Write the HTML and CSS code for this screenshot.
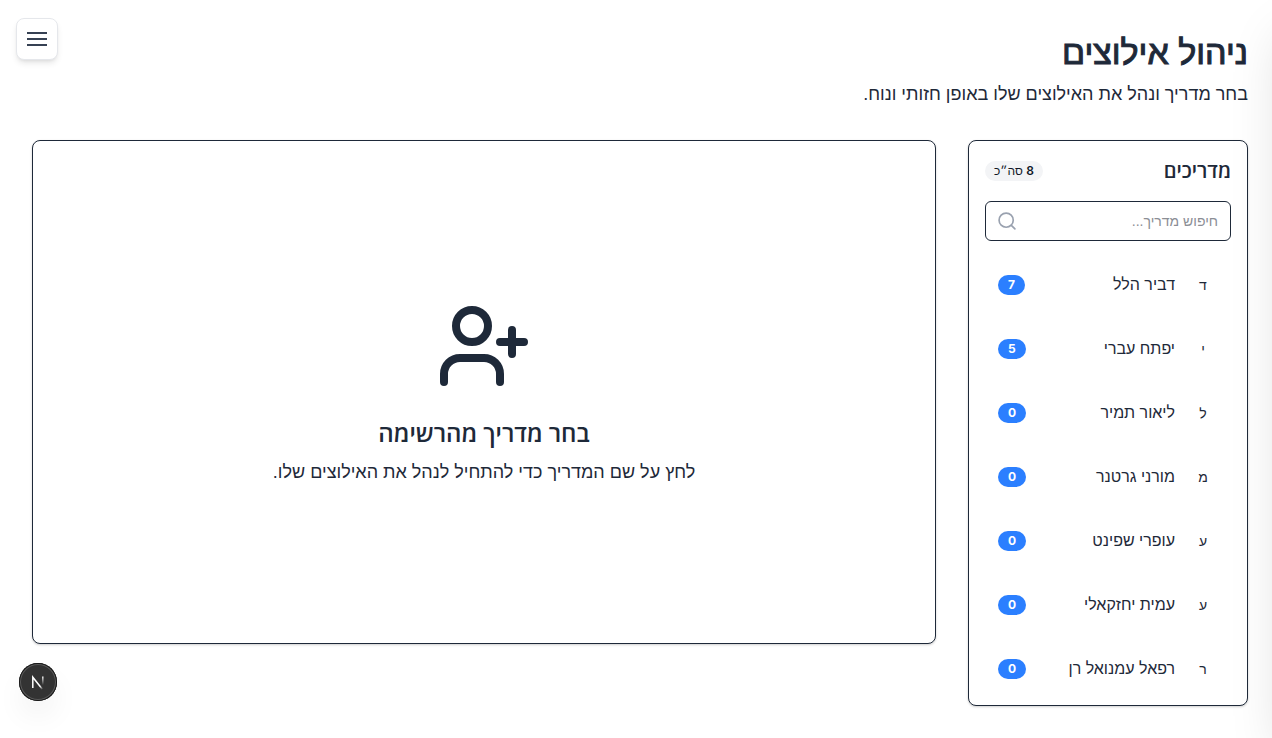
FILE: index.html
```html
<!DOCTYPE html>
<html lang="he" dir="rtl">
<head>
<meta charset="utf-8">
<meta name="viewport" content="width=device-width, initial-scale=1">
<title>ניהול אילוצים</title>
<link rel="stylesheet" href="styles.css">
</head>
<body>
<button class="menu-button" type="button" aria-label="תפריט">
  <svg width="24" height="24" viewBox="0 0 24 24" fill="none" stroke="currentColor" stroke-width="2"><path d="M2 6h20M2 12h20M2 18h20"/></svg>
</button>
<main class="page">
  <header class="page-header">
    <h1 class="page-title">ניהול אילוצים</h1>
    <p class="page-subtitle">בחר מדריך ונהל את האילוצים שלו באופן חזותי ונוח.</p>
  </header>
  <div class="layout">
    <aside class="card guides">
      <div class="guides-header">
        <h2 class="guides-title">מדריכים</h2>
        <span class="total"><b class="total-number">8</b> סה״כ</span>
      </div>
      <div class="search">
        <input class="search-input" type="text" placeholder="חיפוש מדריך..." aria-label="חיפוש מדריך">
        <svg class="search-icon" width="20" height="20" viewBox="0 0 24 24" fill="none" stroke="currentColor" stroke-width="2" stroke-linecap="round" stroke-linejoin="round"><circle cx="11" cy="11" r="8.500"/><path d="m21.500 21.500-4.300-4.300"/></svg>
      </div>
      <div class="guide-list">
        <button class="guide" type="button"><span class="avatar">ד</span><span class="name">דביר הלל</span><span class="count">7</span></button>
        <button class="guide" type="button"><span class="avatar">י</span><span class="name">יפתח עברי</span><span class="count">5</span></button>
        <button class="guide" type="button"><span class="avatar">ל</span><span class="name">ליאור תמיר</span><span class="count">0</span></button>
        <button class="guide" type="button"><span class="avatar">מ</span><span class="name">מורני גרטנר</span><span class="count">0</span></button>
        <button class="guide" type="button"><span class="avatar">ע</span><span class="name">עופרי שפינט</span><span class="count">0</span></button>
        <button class="guide" type="button"><span class="avatar">ע</span><span class="name">עמית יחזקאלי</span><span class="count">0</span></button>
        <button class="guide" type="button"><span class="avatar">ר</span><span class="name">רפאל עמנואל רן</span><span class="count">0</span></button>
      </div>
    </aside>
    <section class="card empty">
      <svg class="empty-icon" width="96" height="96" viewBox="0 0 24 24" fill="none" stroke="currentColor" stroke-width="2" stroke-linecap="round" stroke-linejoin="round"><path d="M16 21v-2a4 4 0 0 0-4-4H6a4 4 0 0 0-4 4v2"/><circle cx="9" cy="7" r="4"/><path d="M19 8v6M22 11h-6"/></svg>
      <h3 class="empty-title">בחר מדריך מהרשימה</h3>
      <p class="empty-text">לחץ על שם המדריך כדי להתחיל לנהל את האילוצים שלו.</p>
    </section>
  </div>
</main>
<div class="drawer-edge" aria-hidden="true"></div>
<button class="dev-button" type="button" aria-label="Dev tools">
  <svg width="38" height="38" viewBox="0 0 38 38" fill="none">
    <defs>
      <linearGradient id="diag" x1="18" y1="18" x2="24" y2="26" gradientUnits="userSpaceOnUse"><stop stop-color="#fff"/><stop offset=".6" stop-color="#fff"/><stop offset="1" stop-color="#fff" stop-opacity="0"/></linearGradient>
      <linearGradient id="stem" x1="24" y1="13" x2="24" y2="22" gradientUnits="userSpaceOnUse"><stop stop-color="#fff"/><stop offset="1" stop-color="#fff" stop-opacity="0"/></linearGradient>
    </defs>
    <path d="M13.800 25V14.200L23.600 26.500" stroke="url(#diag)" stroke-width="1.500"/>
    <path d="M23.800 13.500v9" stroke="url(#stem)" stroke-width="1.500"/>
  </svg>
</button>
</body>
</html>
```
FILE: styles.css
```css
* { box-sizing: border-box; }
body {
  margin: 0;
  min-height: 100vh;
  background: #fff;
  color: #1e2939;
  font-family: "Liberation Sans", Arial, sans-serif;
  overflow: hidden;
}
h1, h2, h3, p { margin: 0; }
h2, h3 { font-family: Inter, "Open Sans", sans-serif; font-weight: 600; }
button { font: inherit; color: inherit; cursor: pointer; }
.page { padding: 32px 24px 32px 32px; }
.page-header { margin-bottom: 32px; }
.page-title { font-size: 34px; line-height: 40px; font-weight: 400; margin-bottom: 8px; -webkit-text-stroke: 1px currentColor; }
.page-subtitle { font-size: 18px; line-height: 28px; }
.layout { display: grid; grid-template-columns: 280px 1fr; gap: 32px; align-items: start; }
.card {
  border: 1px solid #1e2939;
  border-radius: 8px;
  background: #fff;
  box-shadow: 0 1px 3px rgba(0, 0, 0, .1), 0 1px 2px rgba(0, 0, 0, .1);
}
.guides { padding: 16px 16px 8px; }
.guides-header { display: flex; align-items: center; justify-content: space-between; height: 28px; margin-bottom: 16px; }
.guides-title { font-size: 20px; line-height: 28px; }
.total { padding: 2px 9px; border-radius: 10px; background: #f3f4f6; color: #101828; font-size: 12px; line-height: 16px; }
.total-number { font-family: Inter, sans-serif; font-weight: 600; }
.search { position: relative; margin-bottom: 16px; }
.search-input {
  display: block;
  width: 100%;
  height: 40px;
  padding: 8px 12px 8px 40px;
  border: 1px solid #1e2939;
  border-radius: 6px;
  background: #fff;
  color: inherit;
  font: inherit;
  font-size: 14px;
  line-height: 20px;
}
.search-input::placeholder { color: #8b8e95; opacity: 1; }
.search-icon { position: absolute; left: 12px; top: 10px; color: #99a1af; }
.guide-list { display: flex; flex-direction: column; gap: 8px; }
.guide {
  display: flex;
  align-items: center;
  gap: 12px;
  width: 100%;
  height: 56px;
  padding: 0 12px 0 13px;
  border: 0;
  border-radius: 8px;
  background: transparent;
  text-align: start;
}
.avatar { width: 32px; text-align: center; font-size: 14px; line-height: 20px; }
.name { flex: 1; font-size: 16px; line-height: 24px; font-weight: 500; }
.count { padding: 2px 10px; border-radius: 10px; background: #2b7fff; color: #fff; font-family: Inter, sans-serif; font-size: 12px; line-height: 16px; font-weight: 700; }
.empty { display: flex; flex-direction: column; align-items: center; justify-content: center; min-height: 504px; padding: 32px; text-align: center; }
.empty-icon { margin-bottom: 24px; }
.empty-title { font-size: 24px; line-height: 32px; margin-bottom: 8px; }
.empty-text { font-size: 18px; line-height: 28px; }
.menu-button {
  position: fixed;
  left: 16px;
  top: 18px;
  padding: 8px;
  border: 1px solid #e5e7eb;
  border-radius: 8px;
  background: #fff;
  color: #364153;
  box-shadow: 0 4px 6px -1px rgba(0, 0, 0, .1), 0 2px 4px -2px rgba(0, 0, 0, .1);
}
.menu-button svg { display: block; }
.drawer-edge { position: fixed; left: 100%; top: 0; bottom: 0; width: 256px; box-shadow: 0 25px 50px -12px rgba(0, 0, 0, .15); }
.dev-button {
  position: fixed;
  left: 19px;
  bottom: 37px;
  padding: 0;
  border: 0;
  border-radius: 50%;
  background: #333;
  box-shadow: inset 0 0 0 1px #171717, inset 0 0 0 2px #5a5a5a, 0 16px 32px -8px rgba(0, 0, 0, .14);
}
.dev-button svg { display: block; }
```
